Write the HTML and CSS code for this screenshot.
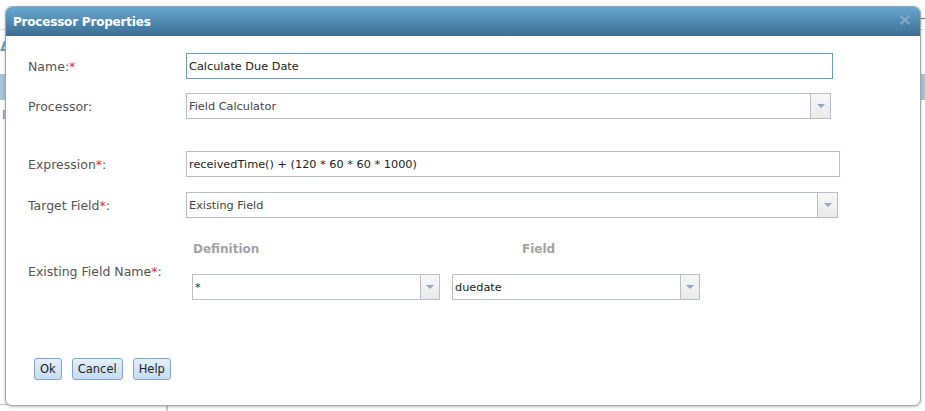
FILE: index.html
```html
<!DOCTYPE html>
<html lang="en">
<head>
    <meta charset="UTF-8">
    <title>Processor Properties</title>
    <link rel="stylesheet" href="styles.css">
</head>
<body>
    <!-- Page underneath the modal -->
    <div class="page">
        <div class="page-top"><span class="page-link"></span></div>
        <div class="page-tabs"><span class="tab-glyph">&#916;</span></div>
        <div class="page-band"></div>
        <div class="page-row"><span class="row-glyph">I</span></div>
        <div class="page-body">
            <div class="page-side"></div>
        </div>
    </div>

    <div class="dialog">
        <div class="dialog-title">
            <span>Processor Properties</span>
            <svg class="close" width="12" height="10" viewBox="0 0 12 10">
                <path d="M1.5 1 L10.5 9 M10.5 1 L1.5 9" stroke="#8aa9c2" stroke-width="2.2" fill="none"/>
            </svg>
        </div>

        <div class="dialog-body">
            <div class="form-row row-name">
                <label class="label">Name:<span class="req">*</span></label>
                <input class="text-input focused w-name" type="text" value="Calculate Due Date">
            </div>

            <div class="form-row row-processor">
                <label class="label">Processor:</label>
                <div class="combo w-processor">
                    <span class="combo-value muted">Field Calculator</span>
                    <span class="combo-btn"><i class="arrow"></i></span>
                </div>
            </div>

            <div class="form-row row-expression">
                <label class="label">Expression<span class="req">*</span>:</label>
                <input class="text-input w-expression" type="text" value="receivedTime() + (120 * 60 * 60 * 1000)">
            </div>

            <div class="form-row row-target">
                <label class="label">Target Field<span class="req">*</span>:</label>
                <div class="combo w-target">
                    <span class="combo-value muted">Existing Field</span>
                    <span class="combo-btn"><i class="arrow"></i></span>
                </div>
            </div>

            <div class="form-row row-existing">
                <label class="label">Existing Field Name<span class="req">*</span>:</label>
                <div class="field-grid">
                    <div class="col-head head-def">Definition</div>
                    <div class="col-head head-field">Field</div>
                    <div class="combo small">
                        <span class="combo-value">*</span>
                        <span class="combo-btn"><i class="arrow"></i></span>
                    </div>
                    <div class="combo small">
                        <span class="combo-value">duedate</span>
                        <span class="combo-btn"><i class="arrow"></i></span>
                    </div>
                </div>
            </div>
        </div>

        <div class="dialog-buttons">
            <button type="button">Ok</button>
            <button type="button">Cancel</button>
            <button type="button">Help</button>
        </div>
    </div>
</body>
</html>
```

FILE: styles.css
```css
html, body {
    margin: 0;
    height: 100%;
    overflow: hidden;
    background: #fff;
    font-family: "DejaVu Sans", Verdana, sans-serif;
    font-size: 12px;
    color: #444;
}

/* background page */
.page {
    height: 100%;
    display: flex;
    flex-direction: column;
}

.page-top {
    height: 29px;
    border-bottom: 1px solid #dcdcdc;
    display: flex;
    justify-content: flex-end;
    align-items: flex-start;
}

.page-link {
    width: 6px;
    height: 9px;
    margin-top: 9px;
    border-left: 1px solid #8aa0c0;
    border-bottom: 1px solid #4c78a8;
}

.page-tabs {
    height: 44px;
    color: #6b9cc4;
    font-weight: bold;
    font-size: 14px;
    padding-top: 8px;
    box-sizing: border-box;
}

.page-band {
    height: 26px;
    background: #a8c3d9;
}

.page-row {
    height: 30px;
    color: #8a7a7a;
    padding: 8px 0 0 2px;
    box-sizing: border-box;
}

.page-body {
    flex: 1;
    display: flex;
    align-items: flex-end;
}

.page-side {
    width: 166px;
    height: 6px;
    border-top: 1px solid #c8c8c8;
    border-right: 2px solid #c8c8c8;
}

/* modal dialog */
.dialog {
    position: absolute;
    left: 5px;
    top: 6px;
    width: 914px;
    height: 398px;
    background: #fff;
    border: 1px solid #a6a6a6;
    border-radius: 7px;
    box-shadow: 0 1px 3px rgba(0, 0, 0, 0.25);
    display: flex;
    flex-direction: column;
}

.dialog-title {
    height: 29px;
    border-radius: 6px 6px 0 0;
    background: linear-gradient(#66a7d0, #3c6d93);
    color: #fff;
    font-weight: bold;
    font-size: 12px;
    letter-spacing: -0.2px;
    display: flex;
    align-items: center;
    justify-content: space-between;
    padding: 0 9px 0 7px;
}

.close {
    margin-top: -4px;
}

.dialog-body {
    flex: 1;
    padding: 17px 0 0 22px;
}

.form-row {
    display: flex;
    align-items: center;
}

.label {
    width: 158px;
    flex-shrink: 0;
    font-size: 12.5px;
    color: #555;
}

.req {
    color: #e0303a;
}

.row-processor { margin-top: 14px; }
.row-expression { margin-top: 32px; }
.row-target { margin-top: 15px; }
.row-existing { margin-top: 24px; }

.text-input {
    height: 26px;
    box-sizing: border-box;
    border: 1px solid #b8bfca;
    padding: 0 2px;
    font-family: inherit;
    font-size: 11.3px;
    color: #222;
    outline: none;
}

.text-input.focused {
    border-color: #6b9cc0;
}

.w-name { width: 647px; }
.w-expression { width: 654px; }
.w-processor { width: 645px; }
.w-target { width: 652px; }

.combo {
    height: 26px;
    box-sizing: border-box;
    border: 1px solid #b8bfca;
    display: flex;
    align-items: stretch;
    background: #fff;
    font-size: 11.3px;
}

.combo-value {
    flex: 1;
    display: flex;
    align-items: center;
    padding-left: 2px;
    color: #222;
}

.combo-value.muted {
    color: #444;
}

.combo-btn {
    width: 19px;
    border-left: 1px solid #b8bfca;
    background: linear-gradient(#f7f7f7, #e9e9e9);
    display: flex;
    align-items: center;
    justify-content: center;
}

.arrow {
    width: 0;
    height: 0;
    border-left: 4px solid transparent;
    border-right: 4px solid transparent;
    border-top: 4px solid #90a6c8;
}

.field-grid {
    display: grid;
    grid-template-columns: 248px 248px;
    column-gap: 12px;
    row-gap: 18px;
    margin-left: 6px;
}

.col-head {
    font-weight: bold;
    font-size: 12px;
    color: #a3a3a3;
}

.head-def { padding-left: 1px; }
.head-field { padding-left: 70px; }

.combo.small .combo-btn {
    width: 18px;
}

.dialog-buttons {
    display: flex;
    gap: 10px;
    padding: 0 0 25px 28px;
}

.dialog-buttons button {
    height: 22px;
    padding: 0 5px;
    font-family: inherit;
    font-size: 11.5px;
    color: #222;
    background: linear-gradient(#e4effa, #c5dcf2);
    border: 1px solid #7fa6cc;
    border-radius: 3px;
}
```
